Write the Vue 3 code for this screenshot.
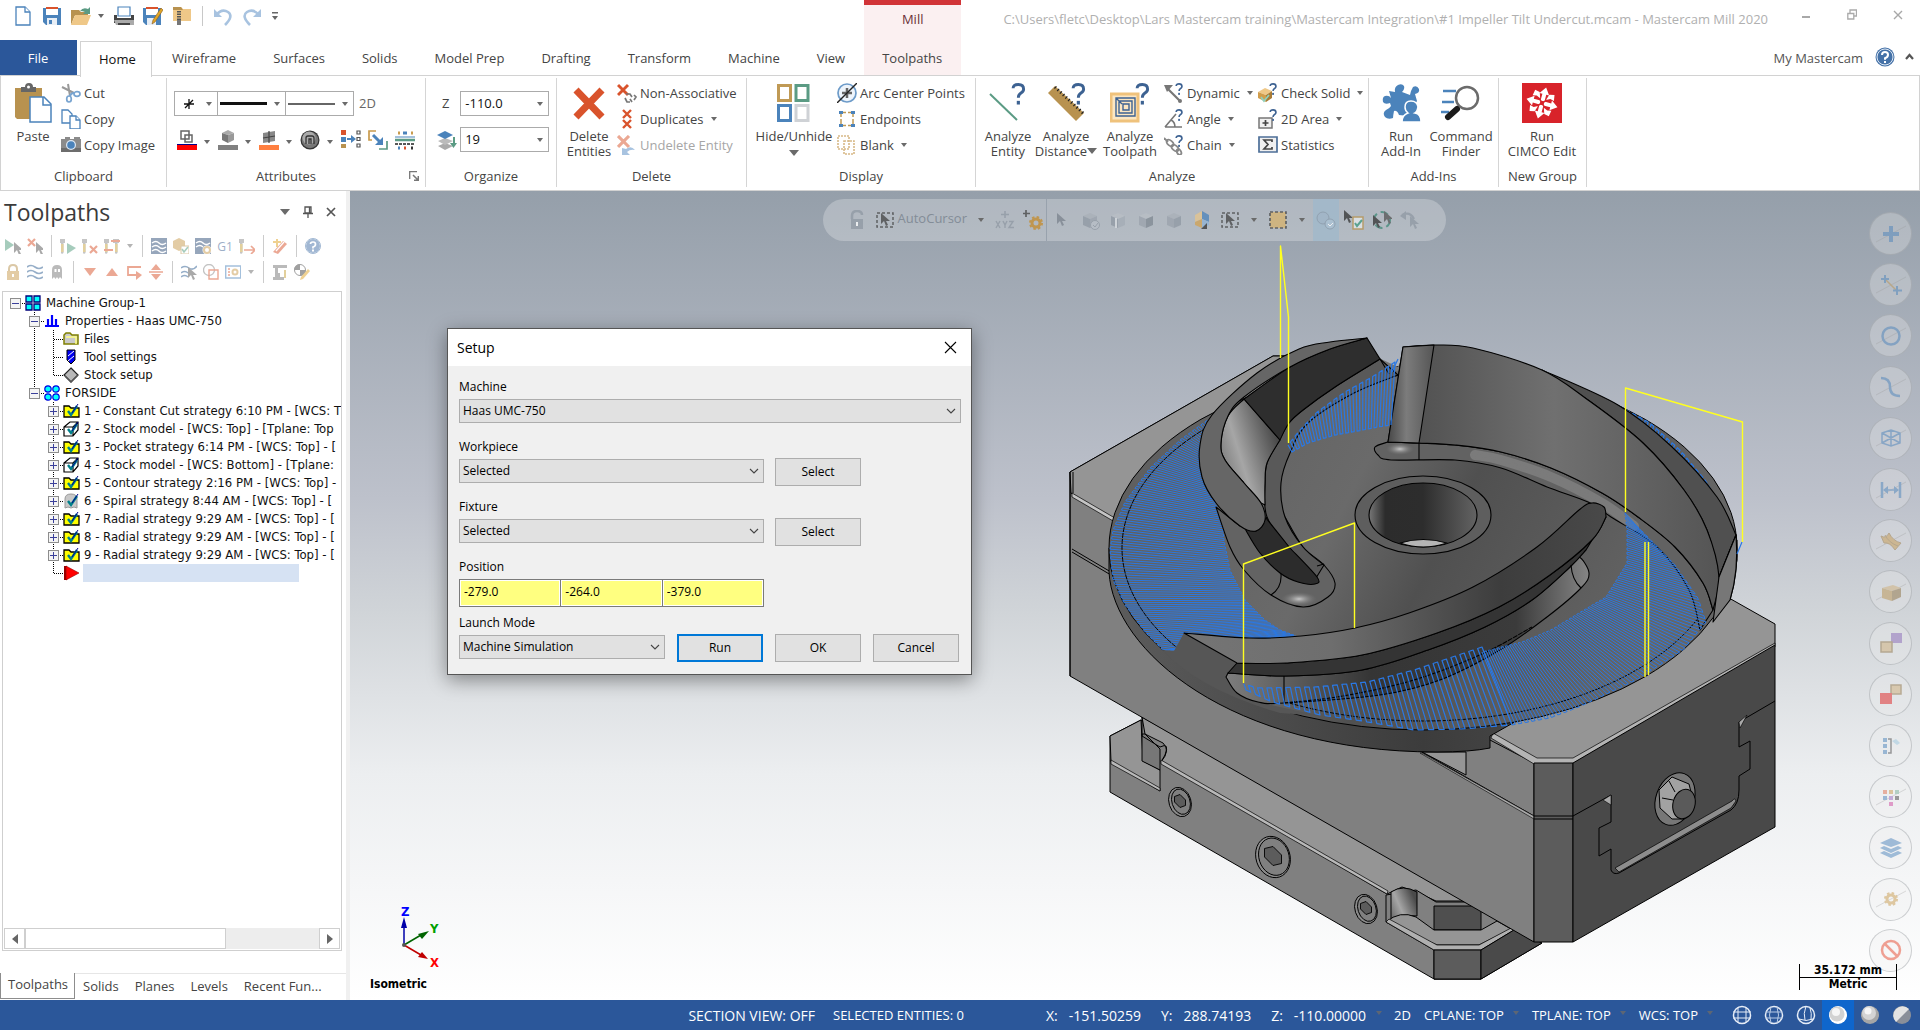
<template>
  <div class="app">
    <!-- Title bar -->
    <header class="titlebar">
      <div class="qat">
        <button v-for="q in quickAccess" :key="q.icon" :class="['icon-btn', q.cls]" :aria-label="q.label">
          <Icon :name="q.icon" :w="q.w || 20" :h="20" />
        </button>
      </div>
      <div class="doc-title">C:\Users\fletc\Desktop\Lars Mastercam training\Mastercam Integration\#1 Impeller Tilt Undercut.mcam - Mastercam Mill 2020</div>
      <div class="win-buttons">
        <button class="icon-btn" aria-label="Minimize"><Icon name="min" :w="10" :h="12" /></button>
        <button class="icon-btn" aria-label="Restore"><Icon name="restore" :w="10" :h="12" /></button>
        <button class="icon-btn" aria-label="Close"><Icon name="close" :w="10" :h="12" /></button>
      </div>
    </header>

    <!-- Ribbon tabs -->
    <nav class="tabs">
      <button class="tab file">File</button>
      <button class="tab home">Home</button>
      <button v-for="t in tabs" :key="t" class="tab">{{ t }}</button>
      <div class="context-tab">
        <span class="context-name">Mill</span>
        <button class="tab">Toolpaths</button>
      </div>
      <div class="account">
        <a href="#" class="my-link">My Mastercam</a>
        <button class="icon-btn" aria-label="Help"><Icon name="help" /></button>
        <button class="icon-btn" aria-label="Collapse ribbon"><Icon name="collapse" :w="9" :h="8" /></button>
      </div>
    </nav>

    <!-- Ribbon -->
    <section class="ribbon">
      <div class="group clipboard">
        <div class="group-body">
          <button class="big"><Icon name="paste" :w="40" :h="40" /><span>Paste</span></button>
          <div class="small-col">
            <button v-for="b in clipboard" :key="b.text" class="small"><Icon :name="b.icon" />{{ b.text }}</button>
          </div>
        </div>
        <div class="group-label">Clipboard</div>
      </div>

      <div class="group attributes">
        <div class="group-body attr-body">
          <div class="attr-row">
            <div class="style-combos">
              <button class="style-combo point" aria-label="Point style"><Icon name="pointStyle" :w="12" :h="12" /><i class="caret"></i></button>
              <button class="style-combo" aria-label="Line style"><i class="line thick"></i><i class="caret"></i></button>
              <button class="style-combo" aria-label="Line width"><i class="line"></i><i class="caret"></i></button>
            </div>
            <button class="plane-mode">2D</button>
          </div>
          <div class="attr-icons">
            <template v-for="a in attributes" :key="a.icon">
              <button class="icon-btn" :aria-label="a.label"><Icon :name="a.icon" /></button>
              <i v-if="a.menu" class="caret"></i>
            </template>
          </div>
        </div>
        <div class="group-label with-launcher">Attributes<Icon class="launcher" name="launcher" :w="10" :h="10" /></div>
      </div>

      <div class="group organize">
        <div class="group-body org-body">
          <div class="org-row">
            <label for="z-depth">Z</label>
            <div class="field"><input id="z-depth" v-model="zDepth" /><i class="caret"></i></div>
          </div>
          <div class="org-row">
            <label for="level" aria-label="Level"><Icon name="layers" /></label>
            <div class="field"><input id="level" v-model="level" /><i class="caret"></i></div>
          </div>
        </div>
        <div class="group-label">Organize</div>
      </div>

      <div class="group delete">
        <div class="group-body">
          <button class="big"><Icon name="bigX" :w="40" :h="40" /><span>Delete<br />Entities</span></button>
          <div class="small-col">
            <button v-for="b in deletes" :key="b.text" class="small" :disabled="b.off">
              <Icon :name="b.icon" />{{ b.text }}<i v-if="b.menu" class="caret"></i>
            </button>
          </div>
        </div>
        <div class="group-label">Delete</div>
      </div>

      <div class="group display">
        <div class="group-body">
          <button class="big wide"><Icon name="hide" :w="40" :h="40" /><span>Hide/Unhide</span><i class="caret large"></i></button>
          <div class="small-col">
            <button v-for="b in displays" :key="b.text" class="small">
              <Icon :name="b.icon" />{{ b.text }}<i v-if="b.menu" class="caret"></i>
            </button>
          </div>
        </div>
        <div class="group-label">Display</div>
      </div>

      <div class="group analyze">
        <div class="group-body">
          <button class="big"><Icon name="anEntity" :w="40" :h="40" /><span>Analyze<br />Entity</span></button>
          <button class="big distance"><Icon name="anDistance" :w="40" :h="40" /><span>Analyze<br />Distance<i class="caret large"></i></span></button>
          <button class="big path"><Icon name="anToolpath" :w="40" :h="40" /><span>Analyze<br />Toolpath</span></button>
          <div class="small-col first">
            <button v-for="b in analyzeA" :key="b.text" class="small"><Icon :name="b.icon" />{{ b.text }}<i class="caret"></i></button>
          </div>
          <div class="small-col">
            <button v-for="b in analyzeB" :key="b.text" class="small">
              <Icon :name="b.icon" />{{ b.text }}<i v-if="b.menu" class="caret"></i>
            </button>
          </div>
        </div>
        <div class="group-label">Analyze</div>
      </div>

      <div class="group addins">
        <div class="group-body">
          <button class="big"><Icon name="puzzle" :w="40" :h="40" /><span>Run<br />Add-In</span></button>
          <button class="big finder"><Icon name="finder" :w="40" :h="40" /><span>Command<br />Finder</span></button>
        </div>
        <div class="group-label">Add-Ins</div>
      </div>

      <div class="group newgroup">
        <div class="group-body">
          <button class="big wide"><Icon name="cimco" :w="40" :h="40" /><span>Run<br />CIMCO Edit</span></button>
        </div>
        <div class="group-label">New Group</div>
      </div>
    </section>

    <main class="workspace">
      <!-- Toolpaths manager -->
      <aside class="panel">
        <div class="panel-head">
          <h1>Toolpaths</h1>
          <div class="panel-tools">
            <i class="caret large"></i>
            <button class="icon-btn" aria-label="Pin"><Icon name="pin" :w="12" :h="12" /></button>
            <button class="icon-btn" aria-label="Close panel"><Icon name="closeDark" :w="10" :h="12" /></button>
          </div>
        </div>
        <div v-for="(row, r) in panelBars" :key="r" class="panel-bar">
          <template v-for="(n, i) in row" :key="i">
            <i v-if="n === '|'" class="bar-sep"></i>
            <i v-else-if="n === 'v'" class="caret bar-caret"></i>
            <button v-else-if="n === 'G1'" class="icon-btn g1">G1</button>
            <button v-else class="icon-btn" :aria-label="n"><Icon :name="n" :w="16" :h="16" /></button>
          </template>
        </div>

        <div class="tree-box">
          <ul class="tree">
            <li v-for="(row, i) in tree" :key="i" class="tree-row">
              <svg v-for="(c, k) in row.g" :key="k" class="guide" width="19" height="18">
                <path v-if="guides[c]" :d="guides[c]" stroke="#000" stroke-dasharray="1 1" fill="none" />
                <g v-if="row.box && k === row.g.length - 1">
                  <rect x="4.500" y="4.500" width="10" height="10" fill="#f4f4f4" stroke="#8d8d8d" />
                  <path :d="row.box === '+' ? 'M6 9.500h7M9.500 6v7' : 'M6 9.500h7'" stroke="#3a3f9a" />
                </g>
              </svg>
              <Icon :name="row.icon" :w="17" :h="16" />
              <span v-if="row.text" class="tree-text">{{ row.text }}</span>
              <span v-else class="insert-row"></span>
            </li>
          </ul>
          <div class="hscroll">
            <button aria-label="Scroll left"><Icon name="left" :w="8" :h="12" /></button>
            <div class="thumb"></div>
            <button class="end" aria-label="Scroll right"><Icon name="right" :w="8" :h="12" /></button>
          </div>
        </div>

        <div class="panel-tabs">
          <button class="active">Toolpaths</button>
          <button v-for="t in ['Solids', 'Planes', 'Levels', 'Recent Fun...']" :key="t">{{ t }}</button>
        </div>
      </aside>

      <!-- Graphics window -->
      <section class="viewport">
        <svg class="model" viewBox="1060 230 730 760" width="730" height="760" stroke-linejoin="round">
          <defs>
            <linearGradient id="side"><stop offset="0" stop-color="#5c5c5c" /><stop offset=".5" stop-color="#3c3c3c" /><stop offset=".95" stop-color="#555" /><stop offset="1" stop-color="#8a8a8a" /></linearGradient>
            <linearGradient id="disc" x2="1" y2=".3"><stop offset="0" stop-color="#5b5b5b" /><stop offset=".45" stop-color="#6a6a6a" /><stop offset=".62" stop-color="#505050" /><stop offset="1" stop-color="#666" /></linearGradient>
            <linearGradient id="blade"><stop offset="0" stop-color="#4b4b4b" /><stop offset=".5" stop-color="#707070" /><stop offset="1" stop-color="#555" /></linearGradient>
            <linearGradient id="nose"><stop offset="0" stop-color="#474747" /><stop offset=".4" stop-color="#7c7c7c" /><stop offset="1" stop-color="#555" /></linearGradient>
            <linearGradient id="inner" x1="0" y1=".8" x2=".9" y2=".3"><stop offset="0" stop-color="#707070" /><stop offset=".4" stop-color="#a6a6a6" /><stop offset="1" stop-color="#4a4a4a" /></linearGradient>
            <linearGradient id="bore"><stop offset="0" stop-color="#777" /><stop offset=".15" stop-color="#2c2c2c" /><stop offset=".5" stop-color="#2d2d2d" /><stop offset="1" stop-color="#636363" /></linearGradient>
            <linearGradient id="low"><stop offset="0" stop-color="#757575" /><stop offset=".35" stop-color="#6e6e6e" /><stop offset=".75" stop-color="#3d3d3d" /><stop offset="1" stop-color="#494949" /></linearGradient>
            <linearGradient id="fillet"><stop offset="0" stop-color="#7d7d7d" /><stop offset=".4" stop-color="#353535" /><stop offset=".8" stop-color="#3b3b3b" /><stop offset="1" stop-color="#858585" /></linearGradient>
            <radialGradient id="shine"><stop offset="0" stop-color="#c8c8c8" /><stop offset="1" stop-color="#777" stop-opacity="0" /></radialGradient>
          </defs>

          <!-- vise base -->
          <g stroke="#000" stroke-width="1">
            <path d="M1110 736 1141 720 1470 905 1513 930 1542 943 1481 979H1434L1110 792Z" fill="#808080" />
            <path d="M1110 736 1141 720 1143 761 1160 770V791L1111 762Z" fill="#959595" />
            <path d="M1142 717 1145 734 1163 743Q1171 750 1161 762L1387 894 1402 887 1416 892 1436 901H1470L1142 717Z" fill="#959595" />
            <path d="M1142 734V761L1160 770V749L1145 734Z" fill="#777" />
            <path d="M1142 717V736L1160 747Q1170 742 1165 755L1161 762" fill="none" />
            <path d="M1111 760 1160 788V791L1111 764ZM1161 760 1388 891 1387 894 1161 764Z" fill="#b8b8b8" stroke-width=".7" />
            <path d="M1386 895V922L1434 950V979H1481V950L1513 930 1470 902H1436L1416 890Z" fill="#808080" />
            <path d="M1391 892Q1403 884 1417 892V916Q1402 914 1391 921Z" fill="url(#inner)" />
            <path d="M1434 906H1481V930H1434Z" fill="#4f4f4f" />
            <path d="M1386 922Q1400 910 1416 917L1434 930H1481L1497 921 1511 929 1479 945H1437Z" fill="#959595" />
            <path d="M1386 922 1389 919 1437 945H1479L1511 928 1514 930 1481 950H1434Z" fill="#b0b0b0" stroke-width=".7" />
            <path d="M1434 950H1481V979H1434Z" fill="#5c5c5c" />
            <path d="M1481 950 1514 930 1542 943 1481 979Z" fill="#4a4a4a" />
          </g>

          <!-- main body -->
          <g stroke="#000">
            <path d="M1070 472 1273 356H1300L1534 760V942L1070 676Z" fill="#808080" />
            <path d="M1070 472 1273 356H1330V520H1113L1071 493Z" fill="#959595" />
            <path d="M1072 493 1120 521 1120 525 1072 497Z" fill="#c4c4c4" stroke-width=".7" />
            <path d="M1072 549 1116 575M1072 552 1116 578M1073 472V493M1070 472V676" fill="none" />
            <path d="M1400 740H1490L1534 763V816L1422 752Z" fill="#808080" />
            <path d="M1422 752H1466V775Z" fill="#959595" />
            <path d="M1422 753 1534 816V819L1420 753Z" fill="#a9a9a9" stroke-width=".6" />
            <path d="M1490 733 1537 761H1573L1775 645V624L1729 598 1650 600Z" fill="#959595" />
            <path d="M1493 733 1537 758H1573L1775 643V647L1573 764H1534L1491 738Z" fill="#b4b4b4" stroke-width=".7" />
            <path d="M1534 763H1573V942H1534Z" fill="#5c5c5c" />
            <path d="M1573 763 1775 645V827L1573 942Z" fill="#494949" />
            <path d="M1534 816H1573M1534 819H1573" />
            <path d="M1573 816 1611 795V822L1599 828V856L1611 849V870Q1613 875 1619 873L1731 810Q1739 804 1739 790V776L1750 769V741L1739 747V722L1775 701" fill="none" />
            <path d="M1615 868 1732 801Q1735 797 1736 801L1731 808 1619 872Z" fill="#8d8d8d" stroke-width=".7" />
            <path d="M1603 800 1611 795V805ZM1739 722 1747 715 1740 728Z" fill="#aaa" stroke-width=".6" />
            <ellipse cx="1675" cy="799" rx="19" ry="27" fill="#777" transform="rotate(20 1675 799)" />
            <path d="M1659 790 1672 777 1689 784 1693 800 1684 819 1672 819 1660 808Z" fill="#a2a2a2" />
            <ellipse cx="1684" cy="804" rx="11" ry="15" fill="#5a5a5a" transform="rotate(15 1684 804)" />
            <path d="M1673 800 1662 798M1675 792 1669 781" />
          </g>
          <g v-for="s in screws" :key="s.x" stroke="#000" stroke-width=".9">
            <ellipse :cx="s.x" :cy="s.y" :rx="s.r" :ry="s.r + 4" fill="#8b8b8b" :transform="`rotate(-18 ${s.x} ${s.y})`" />
            <ellipse :cx="s.x + 1" :cy="s.y" :rx="s.r - 2" :ry="s.r + 2" fill="#808080" :transform="`rotate(-18 ${s.x} ${s.y})`" />
            <path :d="`M${s.x - s.r / 2} ${s.y - s.r / 2}l${s.r / 2}-2 ${s.r / 2} ${s.r / 2}v${s.r / 2}l-${s.r / 2} 2-${s.r / 2}-${s.r / 2}Z`" fill="#5c5c5c" />
          </g>

          <!-- impeller disc -->
          <g stroke="#000">
            <path d="M1109 548V572C1113 650 1230 752 1437 752Q1470 752 1490 748V736L1730 600Q1738 575 1737 540Z" fill="url(#side)" />
            <ellipse cx="1423" cy="548" rx="314" ry="182" fill="url(#disc)" />
            <path d="M1367 338 1381 359 1398 367 1404 352 1404 372 1388 370Z" fill="#777" stroke="none" />
          </g>
          <path :d="hatchLeft" class="toolpath dense" />
          <path :d="hatchEdge" class="toolpath" />
          <ellipse cx="1423" cy="548" rx="301" ry="173" fill="none" stroke="#000" stroke-dasharray="5 1" />
          <path d="M1184 633 1174 651 1162 650Q1200 690 1280 713L1320 716 1258 702 1237 693 1227 675 1237 663Z" fill="#565656" />

          <g stroke="#000" stroke-width="1.100">
            <!-- left blade -->
            <path :d="shapes.tailFillet" fill="#636363" />
            <ellipse cx="1299" cy="599" rx="18" ry="7" fill="url(#shine)" stroke="none" />
            <path :d="shapes.fillet1" fill="#595959" />
            <path :d="shapes.tail" fill="#2c2c2c" />
            <path :d="shapes.b1Light" fill="url(#inner)" />
            <path :d="shapes.b1Dark" fill="#2e2e2e" />
            <path :d="shapes.b1Top" fill="#666" />
            <path d="M1271 595Q1282 588 1281 574M1317 566 1324 564M1380 359 1389 374" fill="none" />
            <!-- right blade -->
            <path :d="shapes.fillet2" fill="#626262" />
            <g fill="none" stroke="#b5b5b5" stroke-linecap="round" opacity=".3">
              <path :d="shapes.shineLine" stroke-width="10" />
              <path :d="shapes.shineLine" stroke-width="6" />
              <path :d="shapes.shineLine" stroke-width="2" />
            </g>
            <ellipse cx="1400" cy="449" rx="14" ry="6" fill="url(#shine)" stroke="none" />
            <path :d="shapes.crescent" fill="#505050" />
            <path :d="shapes.b2Face" fill="url(#blade)" />
            <path d="M1403 347 1434 345 1419 443 1388 442Z" fill="url(#nose)" />
            <path d="M1419 443V460M1719 577 1736 535 1737 560 1730 598" fill="none" />
            <path d="M1719 577 1736 535Q1739 570 1730 600L1713 622Z" fill="#777" />
            <!-- hub -->
            <ellipse cx="1423" cy="515" rx="68" ry="39" fill="#5e5e5e" />
            <ellipse cx="1423" cy="515" rx="54" ry="32" fill="url(#bore)" />
            <path d="M1400 543Q1423 536 1447 543 1423 551 1400 543Z" fill="#b5b5b5" />
            <!-- front blade -->
            <path :d="shapes.fillet3" fill="url(#fillet)" />
            <path :d="shapes.b3Side" fill="#343434" />
            <path :d="shapes.b3Top" fill="url(#low)" />
            <path d="M1284 676V703M1571 565Q1572 580 1581 588" fill="none" />
            <path :d="shapes.innerArc" fill="none" stroke-dasharray="5 1" />
          </g>
          <path :d="hatchTop" class="toolpath" />
          <path :d="hatchFront" class="toolpath" />
          <path :d="hatchRight" class="toolpath dense" />
          <path d="M1742 542 1737 554M1392 372 1398 359" class="toolpath" />

          <!-- rapid moves -->
          <g class="rapid">
            <path d="M1280.500 358V246L1288.500 317V443" />
            <path d="M1625.500 512V388L1742.500 422V542" />
            <path d="M1243.500 683V564L1354.500 523V628" />
            <path d="M1645 542V677M1648.500 542V675" />
          </g>
        </svg>

        <!-- selection bar -->
        <div class="select-bar">
          <template v-for="(n, i) in selectBar" :key="i">
            <span v-if="n === 'AutoCursor'" class="auto">AutoCursor</span>
            <i v-else-if="n === '|'" class="select-sep"></i>
            <i v-else-if="n === 'v'" class="caret"></i>
            <button v-else :class="['icon-btn', { hot: n === 'sNever' }]" :aria-label="n"><Icon :name="n" /></button>
          </template>
        </div>

        <!-- quick masks -->
        <div class="masks">
          <button v-for="n in masks" :key="n" :aria-label="n">
            <Icon :name="n" :w="22" :h="22" />
          </button>
        </div>

        <svg class="gnomon" width="60" height="64" viewBox="0 0 60 64">
          <path d="M14 40V16" stroke="#0000a8" stroke-width="1.500" /><path d="m14 12 3 11h-6z" fill="#0000a8" />
          <path d="m14 40 17-10" stroke="#006400" stroke-width="1.500" /><path d="m39 26-7 8-4-5z" fill="#006400" />
          <path d="m14 40 17 10" stroke="#c00000" stroke-width="1.500" /><path d="m38 54-10-2 4-5z" fill="#c00000" />
          <circle cx="14" cy="40" r="2" fill="#555" />
          <text x="11" y="11" fill="#00f">Z</text><text x="40" y="28" fill="#00a000">Y</text><text x="40" y="62" fill="#f00">X</text>
        </svg>
        <div class="view-name">Isometric</div>
        <div class="scale"><span class="scale-top">35.172 mm</span><span>Metric</span></div>

        <!-- Setup dialog -->
        <form class="dialog" @submit.prevent>
          <div class="dialog-head">Setup<button type="button" class="icon-btn" aria-label="Close dialog"><Icon name="dlgClose" :w="13" :h="13" /></button></div>
          <div class="dialog-body">
            <div class="form-row">
              <div class="form-item grow">
                <label for="machine">Machine</label>
                <div class="combo"><select id="machine"><option>Haas UMC-750</option></select><Icon name="chevron" :w="10" :h="6" /></div>
              </div>
            </div>
            <div v-for="f in ['Workpiece', 'Fixture']" :key="f" class="form-row">
              <div class="form-item mid">
                <label :for="f">{{ f }}</label>
                <div class="combo"><select :id="f"><option>Selected</option></select><Icon name="chevron" :w="10" :h="6" /></div>
              </div>
              <button type="button" class="btn">Select</button>
            </div>
            <div class="form-item mid position">
              <label for="pos-x">Position</label>
              <div class="pos">
                <input id="pos-x" v-model="position.x" />
                <input v-model="position.y" aria-label="Position Y" />
                <input v-model="position.z" aria-label="Position Z" />
              </div>
            </div>
            <div class="form-row last">
              <div class="form-item launch">
                <label for="launch">Launch Mode</label>
                <div class="combo"><select id="launch"><option>Machine Simulation</option></select><Icon name="chevron" :w="10" :h="6" /></div>
              </div>
              <button type="submit" class="btn primary">Run</button>
              <button type="button" class="btn">OK</button>
              <button type="button" class="btn">Cancel</button>
            </div>
          </div>
        </form>
      </section>
    </main>

    <!-- Status bar -->
    <footer class="status">
      <button class="st section">SECTION VIEW: OFF</button>
      <span class="st selected">SELECTED ENTITIES: 0</span>
      <span v-for="c in coords" :key="c.axis" class="st coord"><span>{{ c.axis }}</span><span>{{ c.value }}</span></span>
      <i class="caret"></i>
      <button class="st">2D</button>
      <template v-for="p in ['CPLANE: TOP', 'TPLANE: TOP', 'WCS: TOP']" :key="p">
        <button class="st plane">{{ p }}</button><i class="caret"></i>
      </template>
      <div class="shading">
        <button v-for="n in shading" :key="n" :class="{ on: n === 'shOutline' }" :aria-label="n"><Icon :name="n" /></button>
      </div>
    </footer>
  </div>
</template>

<script setup>
import { ref, reactive, h } from 'vue'

// -- Icons --
const arrow = (x, y, c = '#555') => `<path d="M${x} ${y}v11l3-3 2 5 2-1-2-4h4z" fill="${c}"/>`
const cube = (a, b, c) => `<path d="M3 6 10 3l7 3-7 3z" fill="${a}"/><path d="M3 6l7 3v9l-7-3z" fill="${b}"/><path d="M17 6l-7 3v9l7-3z" fill="${c}"/>`
const page = 'fill="#fff" stroke="#4b83bb" stroke-width="1.3"'
const question = (x, y, s) => `<g transform="translate(${x} ${y}) scale(${s})"><path d="M2 5Q2 1.500 7 1.500T12 6Q12 8 9.500 9.500T7 14" fill="none" stroke="#3d6292" stroke-width="2.800"/><rect x="5.500" y="17" width="3" height="3.500" fill="#3d6292"/></g>`
const redX = (x, y, s, c = '#d9532c') => `<path d="M${x} ${y}l${s} ${s}M${x + s} ${y}l-${s} ${s}" stroke="${c}" stroke-width="${s / 4 + 0.4}"/>`
const check = '<path d="m5 8 3 4 6-9" fill="none" stroke="#00808a" stroke-width="2.400"/><path d="m9 10 6-9" stroke="#00008b"/>'
const tool = (x) => `<path d="M${x} 1h6v4h-1.500v10l-1.500 1-1-1V5h-2z" fill="#8c8c8c"/><rect x="${x + 2}" y="6" width="2.500" height="8" fill="#c9a33b"/>`
const globe = '<circle cx="10" cy="10" r="8.500" fill="none" stroke="#e6edf7" stroke-width="1.500"/>'
const gear = (x, y, c) => `<circle cx="${x}" cy="${y}" r="4" fill="none" stroke="${c}" stroke-width="3"/><circle cx="${x}" cy="${y}" r="6" fill="none" stroke="${c}" stroke-width="2" stroke-dasharray="2.500 2.200"/>`
const slash = '<path d="M-4 19 26 3" stroke="#999" stroke-width="1" opacity=".6"/>'

const icons = {
  new: `<path d="M3 1h9l5 5v13H3z" ${page}/><path d="M12 1v5h5" ${page}/>`,
  save: '<path d="M1 2h18v17H4l-3-3z" fill="#4b83bb"/><path d="M4 2h12v7H4z" fill="#fff"/><path d="M4 1h12v2H4z" fill="#d9532c"/><path d="M5 12h10v7H5z" fill="#e8eef5"/><path d="M7 14h3v4H7z" fill="#4b83bb"/>',
  open: '<path d="M0 4h8l2 2h7v4H0z" fill="#b8924f"/><path d="M0 4v15l4-10z" fill="#b8924f"/><path d="M0 19 4 9h16l-4 10z" fill="#efc888"/><path d="M9 5q3-4 8-2l2-2v7h-7l2-2q-2-1-5-1z" fill="#5b9b84"/>',
  caretIcon: '<path d="M1 8h6l-3 4z" fill="#666"/>',
  print: '<path d="M4 1h12v9H4z" fill="#fff" stroke="#4b83bb" stroke-width="1.200"/><path d="M0 9h3v3h14V9h3v8H0z" fill="#444"/><path d="M0 14h20v5H2z" fill="#aaa"/><path d="M4 17h12v2H4z" fill="#444"/>',
  saveAs: '<path d="M0 2h18v17H3l-3-3z" fill="#4b83bb"/><path d="M3 2h12v7H3z" fill="#fff"/><path d="M3 1h12v2H3z" fill="#d9532c"/><path d="M4 12h9v7H4z" fill="#e8eef5"/><path d="m18 2 2 2-8 12-3 2 1-4z" fill="#e0a526" stroke="#8a5a20" stroke-width=".6"/>',
  zip: '<path d="M1 1h8l2 2h8v12H1z" fill="#efc888"/><path d="M1 1h8l2 3H1z" fill="#b8924f"/><path d="M7 5v14" stroke="#555" stroke-width="4" stroke-dasharray="1.500 1"/><path d="M5 14h4v5H5z" fill="#777"/>',
  sep: '<path d="M1.500 -4v28" stroke="#c8c8c8"/>',
  undo: '<path d="M3 9q6-7 12-3t-3 13" fill="none" stroke="#a8c3e0" stroke-width="2.600"/><path d="M1 3v8h8z" fill="#a8c3e0"/>',
  redo: '<path d="M17 9q-6-7-12-3t3 13" fill="none" stroke="#a8c3e0" stroke-width="2.600"/><path d="M19 3v8h-8z" fill="#a8c3e0"/>',
  custom: '<path d="M1 6h6v1.500H1zM1 10h6l-3 4z" fill="#666"/>',
  min: '<path d="M1 7h8v2H1z" fill="#a8a8a8"/>',
  restore: '<path d="M3 1h6.500v6H3z" fill="none" stroke="#aaa" stroke-width="1.300"/><path d="M.8 4.500h6v5.500h-6z" fill="#fff" stroke="#aaa" stroke-width="1.300"/>',
  close: '<path d="m1 2 8 8M9 2l-8 8" stroke="#a8a8a8" stroke-width="1.400"/>',
  closeDark: '<path d="m1 2 8 8M9 2l-8 8" stroke="#555" stroke-width="1.700"/>',
  pin: '<path d="M3 1h6v6H3zM7.500 1v6M1 7.500h10M6 8v4" fill="none" stroke="#555" stroke-width="1.300"/>',
  help: '<circle cx="10" cy="10" r="9.500" fill="#4572a8"/><circle cx="10" cy="10" r="8" fill="#4572a8" stroke="#dfe9f5"/><path d="M7 8q0-3 3-3t3 2.700-3 3.500v1.500" fill="none" stroke="#fff" stroke-width="2"/><rect x="9" y="14" width="2" height="2" fill="#fff"/>',
  collapse: '<path d="m1 6 3.500-4L8 6" fill="none" stroke="#555" stroke-width="2.200"/>',
  launcher: '<path d="M.7 8V.7H8" fill="none" stroke="#777" stroke-width="1.300"/><path d="m4 4 5 5M9.300 5v4.300H5" fill="none" stroke="#777" stroke-width="1.500"/>',

  paste: '<path d="M2 5h27v31H4l-2-2z" fill="#b8924f"/><path d="M8 4h4q0-4 4-4t4 4h3v5H8z" fill="#666"/><circle cx="15.500" cy="4" r="1.500" fill="#fff"/><path d="M17 14h14l7 7v18H17z" fill="#fff" stroke="#4b83bb" stroke-width="1.500"/><path d="M30 14v8h8" fill="none" stroke="#4b83bb" stroke-width="1.500"/>',
  cut: '<path d="M1 4l12 6M7 1l2 12" stroke="#999" stroke-width="2"/><ellipse cx="16" cy="11" rx="3" ry="2.300" fill="none" stroke="#78a4d0" stroke-width="1.700"/><ellipse cx="8" cy="16" rx="2.300" ry="3" fill="none" stroke="#78a4d0" stroke-width="1.700"/><path d="M9 13q1-3 4-3" stroke="#78a4d0" stroke-width="2" fill="none"/>',
  copy: `<path d="M1 1h6l4 4v9H1z" ${page}/><path d="M9 7h6l4 4v9H9z" ${page}/><path d="M15 7v4h4" ${page}/>`,
  camera: '<path d="M0 4h4V2h5v2h4V2h6v2h1v13H0z" fill="#8b8b8b"/><path d="M0 13h20v4H0z" fill="#6d6d6d"/><circle cx="10" cy="10" r="5" fill="#dce8f5"/><circle cx="10" cy="10" r="3.800" fill="#4b83bb"/>',
  pointStyle: '<path d="M6 1v10M1 6h10M2 10l8-8" stroke="#111" stroke-width="1.300"/>',
  aWire: '<path d="M4 1h8v8H4zM8 5h7v7H8z" fill="none" stroke="#666" stroke-width="1.500"/><path d="M0 14h20v1H0z" fill="#00008b"/><path d="M0 15h20v5H0z" fill="#f00"/>',
  aSolid: '<path d="m4 3 6-3 6 3-6 2z" fill="#aaa"/><path d="M4 3l6 2v8l-6-3z" fill="#777"/><path d="m16 3-6 2v8l6-3z" fill="#999"/><path d="M0 15h20v5H0z" fill="#808080"/>',
  aSurf: '<path d="M4 3 16 1v10L4 13z" fill="#888"/><path d="M4 8 16 6M10 1v12" stroke="#444" stroke-width="1.200"/><path d="M0 15h20v5H0z" fill="#ff7f40"/>',
  aMat: '<circle cx="10" cy="10" r="9.500" fill="#333"/><circle cx="10" cy="10" r="8.300" fill="#777"/><circle cx="9" cy="8" r="6.500" fill="#aaa"/><path d="M6 14V8q0-2 2-2h4q2 0 2 2v6M9 14V9h2v5" fill="none" stroke="#333" stroke-width="1.300"/>',
  aSet: '<path d="M0 0h5v5H0z" fill="#d9532c"/><path d="M0 7h5v5H0z" fill="#4b83bb"/><path d="M0 14h5v4H0z" fill="#b8924f"/><path d="M6 9h6" stroke="#4b83bb" stroke-width="2"/><path d="m10 5 5 4-5 4z" fill="#4b83bb"/><path d="M16 1h3v3h-3zM16 7.500h3v3h-3zM16 14h3v3h-3z" fill="none" stroke="#555" stroke-width="1.200"/>',
  aMatch: '<path d="M8 1H1v9h3" fill="none" stroke="#c99b4d" stroke-width="1.700"/><path d="M19 11v8h-8" fill="none" stroke="#5b9b84" stroke-width="1.700"/><path d="m5 5 7 7" stroke="#4b83bb" stroke-width="3"/><path d="M15 7v8H7z" fill="#4b83bb"/>',
  aLines: '<path d="M0 7h20" stroke="#4b83bb"/><path d="M0 10h20" stroke="#5b9b84" stroke-width="2.500"/><path d="M0 14h20" stroke="#222" stroke-width="1.500" stroke-dasharray="3 1"/><path d="M3 3h2M16 3h2" stroke="#c99b4d" stroke-width="3"/><path d="M8 3h4" stroke="#4b83bb" stroke-width="3"/><path d="M3 18h2" stroke="#4b83bb" stroke-width="3"/><path d="M9 18h2" stroke="#d9532c" stroke-width="3"/><path d="M16 18h2" stroke="#333" stroke-width="3"/>',
  layers: '<path d="m1 16 7-3 8 3-8 4z" fill="#aaa"/><path d="m1 11 7-3 8 3-8 4z" fill="#bbb"/><path d="m0 5 8-4 8 4-8 4z" fill="#4b83bb"/><path d="M17 7v8" stroke="#5b9b84" stroke-width="2"/><path d="M13 13h7l-3.500 5z" fill="#5b9b84"/>',

  bigX: '<path d="m7 7 26 27M33 7 7 34" stroke="#d9532c" stroke-width="7"/>',
  delNon: redX(1, 2, 10) + '<path d="M9 11h4l2 3M17 12l2 2-2 3M8 15l2 4h3M15 19l-2-3" fill="none" stroke="#777" stroke-width="1.700"/>',
  delDup: redX(6, 1, 8) + redX(6, 11, 8),
  undel: redX(1, 1, 11, '#eba893') + '<path d="M5 13v7h8l-3-3q3-3 8-2-4-5-9-1z" fill="#a8c3e0"/>',
  hide: '<g fill="none" stroke-width="3"><path d="M4.500 2.500h12v15h-12z" stroke="#c09a55"/><path d="M22 2.500h12v15H22z" stroke="#5b9b84"/><path d="M4.500 22.500h12v15h-12z" stroke="#4b83bb"/><path d="M22 22.500h12v15H22z" stroke="#cfd2d6"/></g>',
  arc: '<circle cx="10" cy="10" r="9" fill="#eef4fb" stroke="#6d9bc9" stroke-width="1.700"/><path d="M10 5v10M5 10h10" stroke="#666" stroke-width="2.500"/><path d="M0 20 20 0" stroke="#222" stroke-width="1.400"/>',
  ends: '<path d="M4 3.500h12M4 16.500h12M4 3v13M16 3v13" stroke="#c09a55" stroke-width="1.500" stroke-dasharray="5 2"/><path d="M2 2h4v3H2zM14 2h4v3h-4zM2 15h4v3H2zM14 15h4v3h-4z" fill="#4b83bb"/>',
  blank: '<path d="M1 1h11v13H1zM7 6h10v13H7z" fill="none" stroke="#d8b988" stroke-width="1.600" stroke-dasharray="2 1"/>',
  anEntity: '<path d="m2 11 27 26" stroke="#5b9b84" stroke-width="2"/>' + question(23, 0, 1.05),
  anDistance: '<path d="m2 10 7-7 29 27-8 8z" fill="#b8924f"/><path d="m9 4 29 27" stroke="#222" stroke-width="3" stroke-dasharray="1.200 2.500"/>' + question(25, 0, 1.05),
  anToolpath: '<path d="M1 11h27v27H1z" fill="#fbe6c2" stroke="#efc27c" stroke-width="3"/><path d="M6 15h19v18H6zM9 18h13v12H9zM13 21h6v6h-6zM6 15l6 6" fill="none" stroke="#3d6292" stroke-width="1.400"/>' + question(25, 0, 1.05),
  dyn: '<path d="m4 6 12 12" stroke="#777" stroke-width="2.200"/><path d="M0 2h9L3 9z" fill="#777"/><circle cx="16" cy="18" r="2" fill="#777"/>' + question(11, 0, 0.58),
  angle: '<path d="M1 18h17M1 18 12 5M7 11q4 2 4 7" fill="none" stroke="#777" stroke-width="1.600"/>' + question(11, 0, 0.58),
  chain: '<g fill="none" stroke="#888" stroke-width="1.800"><path d="M0 3l4 4"/><ellipse cx="6" cy="8" rx="4" ry="2.500" transform="rotate(40 6 8)"/><ellipse cx="11" cy="13" rx="4" ry="2.500" transform="rotate(40 11 13)"/><ellipse cx="15" cy="17" rx="3" ry="2" transform="rotate(60 15 17)"/></g>' + question(11, 0, 0.58),
  solid: '<path d="m0 9 7-4 7 3-6 4z" fill="#efc888"/><path d="m0 9 8 3v7l-8-4z" fill="#d19d4b"/><path d="m14 8-6 4v7l6-4z" fill="#a97b35"/><path d="m3 14 3 4 5-6" fill="none" stroke="#8fd0bd" stroke-width="1.800"/>' + question(11, 0, 0.58),
  area: '<path d="M1 9h13v10H1z" fill="#f0f0f0" stroke="#777" stroke-width="1.500"/><path d="M7.500 11v6M4.500 14h6" stroke="#444" stroke-width="1.700"/>' + question(11, 0, 0.58),
  stats: '<path d="M1 2h18v15H1z" fill="#f0f0f0" stroke="#4d6f98" stroke-width="1.700"/><path d="M14 7V5H6l4 4.500L6 14h8v-2" fill="none" stroke="#444" stroke-width="1.700"/>',
  puzzle: '<g fill="#4b83bb"><path d="m8 8 6 1q-1-5 3-7 4-2 6 1 1 3-2 6l8 3q1-5 3-8 4-2 6 2 1 4-4 5l2 7-9 15-9-1q-2-5-5-4-1 5-1 7-5 2-8-1-3-4 1-7 4-2 5-4l-1-3q-5 2-7-1-1-5 2-6 4-1 6 2z"/></g><path d="M30 18q6 0 7 6-1 5-3 6 6 1 6 9H21q0-7 6-9-3-2-3-6 0-6 6-6z" fill="#4b83bb" stroke="#fff" stroke-width="1.500"/>',
  finder: '<path d="M2 8h13M1 19h12M0 29h8" stroke="#4b83bb" stroke-width="2.500"/><circle cx="26" cy="15" r="11" fill="#fff" stroke="#6b6b6b" stroke-width="2.500"/><path d="m16 26-9 8" stroke="#1b1b1b" stroke-width="6" stroke-linecap="round"/>',
  cimco: '<path d="M0 0h40v40H0z" fill="#d8232a"/><g transform="rotate(15 20 20)"><g fill="#fff"><path d="M18 18v-7h-3l5-7 5 7h-3v7zM18 22v7h-3l5 7 5-7h-3v-7zM18 18h-7v-3l-7 5 7 5v-3h7zM22 18h7v-3l7 5-7 5v-3h-7z"/><path d="m10 9 5 1 2 6-4-2-4 1zM30 9l-5 1-2 6 4-2 4 1zM10 31l5-1 2-6-4 2-4-1zM30 31l-5-1-2-6 4 2 4-1z"/></g><path d="M16 16l8 8M24 16l-8 8" stroke="#d8232a" stroke-width="1.300"/></g>',

  pSelAll: '<path d="m0 1 9 6-9 6z" fill="#4f9a7c"/>' + arrow(9, 4),
  pSelNone: redX(1, 1, 7) + arrow(9, 4),
  pRegen: tool(-1) + '<path d="m7 5 9 5-9 6z" fill="#4f9a7c"/>',
  pRegenX: tool(-1) + redX(8, 8, 7),
  pSwap: tool(-1) + tool(9) + '<path d="M7 3h9M0 12h9" stroke="#d9532c" stroke-width="2"/>',
  pBack: '<path d="M0 0h16v16H0z" fill="#2f4f79"/><path d="M1 5q4-3 7 0t7 0M1 9q4-3 7 0t7 0M1 13q4-3 7 0t7 0" fill="none" stroke="#fff" stroke-width="1.500"/>',
  pVerify: '<path d="m0 3 6-3 6 3v7l-6 3-6-3z" fill="#c99b4d"/><path d="M8 8h8v8H8z" fill="#fff" stroke="#b8924f"/><path d="m9 11 2 3 4-5" stroke="#4f9a7c" fill="none" stroke-width="1.600"/>',
  pSim: '<path d="M0 0h16v16H0z" fill="#2f4f79"/><path d="M1 5q4-3 7 0t7 0M1 9q4-3 7 0" fill="none" stroke="#fff" stroke-width="1.500"/><circle cx="12" cy="12" r="4.500" fill="#fff"/><circle cx="12" cy="12" r="3" fill="none" stroke="#c99b4d" stroke-width="2"/>',
  pFeed: tool(-1) + '<path d="M5 12h10M12 8l4 4-4 4" stroke="#d9532c" stroke-width="1.700" fill="none"/>',
  pWand: '<path d="m1 14 10-11 4 3-9 10z" fill="#d9532c"/><path d="m4 13 8-9" stroke="#fff" stroke-width="1.300"/><path d="M1 4h8M5 1v8" stroke="#e0a526" stroke-width="2"/>',
  pHelp: '<circle cx="8" cy="8" r="7" fill="#4572a8"/><circle cx="8" cy="8" r="7.500" fill="none" stroke="#4572a8"/><path d="M5.500 6q0-2 2.500-2t2.500 2.200T8 9v1.500" fill="none" stroke="#fff" stroke-width="1.700"/><rect x="7" y="11.500" width="2" height="2" fill="#fff"/>',
  pLock: '<path d="M4 8V5q0-4 4-4t4 4v3" fill="none" stroke="#b8924f" stroke-width="2"/><path d="M2 7h12v9H2z" fill="#c99b4d"/><path d="M7 10h2v3H7z" fill="#fff"/>',
  pWaves: '<path d="M0 3q4-3 8 0t8 0M0 8q4-3 8 0t8 0M0 13q4-3 8 0t8 0" fill="none" stroke="#2f5f93" stroke-width="1.600"/>',
  pGhost: '<path d="M3 15V6q0-5 5-5t5 5v9l-2-2-1.500 2L8 13l-1.500 2L5 13z" fill="#777"/><path d="M5.500 5h2v3h-2zM9 5h2v3H9z" fill="#fff"/>',
  pDown: '<path d="M2 4h12l-6 8z" fill="#d9532c"/>',
  pUp: '<path d="M2 12h12L8 4z" fill="#d9532c"/>',
  pInsert: '<path d="M15 3H2v8h9" fill="none" stroke="#d9532c" stroke-width="1.800"/><path d="m10 7 6 4-6 5z" fill="#d9532c"/>',
  pScroll: '<path d="M3 6h10L8 0zM3 10h10l-5 6zM1 7.300h14v1.500H1z" fill="#d9532c"/>',
  pPick: '<path d="M0 4q4-3 8 0t8-2M0 9q4-3 7 0M0 13q4-3 7 0" fill="none" stroke="#2f5f93" stroke-width="1.500"/>' + arrow(7, 3),
  pBool: '<circle cx="6" cy="6" r="5.500" fill="none" stroke="#888" stroke-width="1.300"/><path d="M6 6h9v9H6z" fill="none" stroke="#d9532c" stroke-width="1.400"/>',
  pOptions: '<path d="M.7 2h15v12H.7z" fill="#fff" stroke="#4b83bb" stroke-width="1.400"/><path d="M3 5h2M3 8h2M3 11h2" stroke="#d9532c" stroke-width="1.500"/><circle cx="10" cy="8" r="2.500" fill="none" stroke="#c99b4d" stroke-width="2"/>',
  pMachine: '<path d="M1 1h14v3H1zM3 4h3v5H3zM1 13h11v3H1zM3 9h5v4H3z" fill="#777"/><path d="M13 6v8" stroke="#c9a33b" stroke-width="2"/>',
  pEdit: '<circle cx="6" cy="6" r="5.500" fill="#fff" stroke="#444"/><path d="M6 0a6 6 0 0 0-6 6h6zM6 12a6 6 0 0 0 6-6H6z" fill="#444"/><path d="m14 5 2 2-7 8-3 1 1-3z" fill="#e0a526"/>',

  tGroup: '<path d="M1 1h6v6H1zM9 1h6v6H9zM1 9h6v6H1zM9 9h6v6H9z" fill="#0ff" stroke="#00007a" stroke-width="1.300"/>',
  tProps: '<path d="M1 13h14" stroke="#00f" stroke-width="2"/><path d="M4 13V6M8 13V2M12 13V6" stroke="#00f" stroke-width="2.200"/>',
  tFiles: '<path d="M1 13V4l2-2h4l2 2h6v9z" fill="#c9c9c9" stroke="#808000" stroke-width="1.500"/><path d="M3 6h10v7" fill="none" stroke="#ffff80" stroke-width="1.500"/>',
  tTool: '<path d="M4 1h8v10l-4 4-4-4z" fill="#0000f0" stroke="#000"/><path d="m5 7 6-5M5 12l6-5" stroke="#fff"/>',
  tStock: '<path d="m8 1 7 7-7 7-7-7z" fill="#b8b8b8" stroke="#222" stroke-width="1.200"/><path d="m2 9 6 6 7-7" fill="none" stroke="#555" stroke-width="1.500"/>',
  tOps: '<g fill="#0ff" stroke="#0000e0" stroke-width="1.200"><circle cx="4" cy="4" r="3.200"/><circle cx="12" cy="4" r="3.200"/><circle cx="4" cy="12" r="3.200"/><circle cx="12" cy="12" r="3.200"/></g>',
  tFolder: `<path d="M1 14V3h5l2 2h8v9z" fill="#ff0" stroke="#000" stroke-width="1.300"/>${check}`,
  tModel: `<path d="m1 6 6-5h8v8l-5 6H1zM1 6h9v9M10 6l5-5" fill="#fff" stroke="#000" stroke-width="1.200"/>${check}`,
  tGhost: `<path d="M2 15V6q0-5 6-5t6 5v9l-3-1-3 1-3-1z" fill="#c8c8c8" stroke="#999"/>${check}`,
  tArrow: '<path d="M1 1h3v14H1z" fill="#900"/><path d="m3 1 13 7-13 7z" fill="#f00" stroke="#900" stroke-width=".6"/>',
  left: '<path d="M7 1v10L1 6z" fill="#666"/>',
  right: '<path d="M1 1v10l6-5z" fill="#666"/>',
  chevron: '<path d="m1 1 4 4 4-4" fill="none" stroke="#444" stroke-width="1.100"/>',
  dlgClose: '<path d="m1 1 11 11M12 1 1 12" stroke="#000" stroke-width="1.100"/>',

  sLock: '<path d="M5 9V6q0-5 5-5t5 4" fill="none" stroke="#8f98a3" stroke-width="2.500"/><path d="M4 9h12v10H4z" fill="#8f98a3"/><path d="M9 12h2v4H9z" fill="#fff"/>',
  sCursor: '<path d="M2 3h16v14H2z" fill="none" stroke="#444" stroke-width="1.500" stroke-dasharray="3 2"/>' + arrow(6, 3, '#444'),
  sXyz: '<path d="M10 1v7M6 4.500h8" stroke="#8f98a3" stroke-width="1.600"/><path d="m1 11 4 7M5 11l-4 7M8 11l2 4 2-4M10 15v3M14 11.500h4l-4 6h5" fill="none" stroke="#8f98a3" stroke-width="1.400"/>',
  sGear: '<path d="M3 0v7M0 3.500h7" stroke="#444" stroke-width="1.700"/>' + gear(13, 13, '#c58b2a'),
  sArrow: arrow(5, 3, '#7b838d'),
  sCubeA: cube('#a9b0b8', '#8f98a3', '#9aa2ac') + '<circle cx="15" cy="15" r="4.500" fill="#b8bfc7" stroke="#8f98a3"/><path d="m13 15 2 2 3-4" stroke="#8f98a3" fill="none"/>',
  sCubeB: cube('#b9bfc6', '#8f98a3', '#a4acb5') + '<path d="M8 8v10" stroke="#d8dce0" stroke-width="2"/>',
  sCubeC: cube('#b9bfc6', '#9aa2ac', '#7f8892'),
  sCubeD: cube('#a9b0b8', '#9aa2ac', '#8f98a3'),
  sCubeE: '<path d="m3 5 7-4v8l-7 3z" fill="#e6c58c"/><path d="m3 12 7-3v9l-7-3z" fill="#d3a252"/><path d="m10 1 7 4v7l-7-3z" fill="#4b83bb"/><path d="m10 9 7 3v3l-7 3z" fill="#8fb3d6"/><path d="m9 19 6-6v6z" fill="#333"/>',
  sRect: '<path d="M2 2h16v16H2z" fill="#d8b36c" stroke="#444" stroke-width="1.700" stroke-dasharray="3 2"/>',
  sNever: '<circle cx="7" cy="8" r="6" fill="#9db5c9" stroke="#8699ab"/><circle cx="14" cy="14" r="5" fill="#a9c3d6" stroke="#8699ab"/><path d="m12 14 2 2 3-3" stroke="#fff" fill="none"/>',
  sVerify: arrow(0, 0, '#333') + '<path d="M9 7h10v12H9z" fill="#e8ecef" stroke="#b8924f" stroke-width="1.500"/><path d="m11 13 2 3 5-6" fill="none" stroke="#3f9a80" stroke-width="2"/>',
  sInvert: '<circle cx="10" cy="10" r="8" fill="none" stroke="#3f8a78" stroke-width="2" stroke-dasharray="8 4"/>' + arrow(1, 5, '#333') + arrow(12, 1, '#555'),
  sUndo: '<path d="M2 5q8-4 12 4" fill="none" stroke="#8f98a3" stroke-width="2.200"/><path d="m0 6 6-5v9z" fill="#8f98a3"/>' + arrow(10, 6, '#8f98a3'),

  mPoint: slash + '<path d="M11 3v16M3 11h16" stroke="#4b83bb" stroke-width="4"/>',
  mLine: slash + '<path d="M4 4l13 13" stroke="#b8924f" stroke-width="1.500"/><path d="M5 1v8M1 5h8M17 12v9M13 16.500h9" stroke="#4b83bb" stroke-width="2"/>',
  mArc: slash + '<circle cx="11" cy="11" r="8.500" fill="none" stroke="#4b83bb" stroke-width="2.500"/>',
  mSpline: slash + '<path d="M1 2q9 0 9 9t10 9" fill="none" stroke="#4b83bb" stroke-width="2.500"/>',
  mWire: slash + '<path d="m2 6 9-3 9 3v10l-9 3-9-3zM2 6l18 10M20 6 2 16M11 3v16" fill="none" stroke="#4b83bb" stroke-width="1.500"/>',
  mDim: slash + '<path d="M2 3v16M20 3v16" stroke="#4b83bb" stroke-width="2.500"/><path d="M4 11h14" stroke="#4b83bb" stroke-width="1.500"/><path d="m3 11 5-4v8zM19 11l-5-4v8z" fill="#4b83bb"/>',
  mSurf: slash + '<path d="M1 6q5 3 8-3 4 8 12 10l-6 7Q10 12 4 13z" fill="#c99b4d" stroke="#9b7b45"/><path d="M5 5q4 8 13 11" fill="none" stroke="#9b7b45"/>',
  mSolid: slash + '<path d="m2 7 11-3 8 3-9 3z" fill="#cfae78"/><path d="m2 7 10 3v10L2 17z" fill="#b8924f"/><path d="m21 7-9 3v10l9-4z" fill="#8d7143"/>',
  mGroup: '<path d="M11 1h11v10H11z" fill="#8a68b8"/><path d="M1 10h11v10H1z" fill="#cfae78" stroke="#8d7143" stroke-width="1.500"/>',
  mResult: '<path d="M11 2h10v9H11z" fill="#cfae78" stroke="#8d7143" stroke-width="1.500"/><path d="M0 10h12v11H0z" fill="#e02020"/>',
  mNamed: '<path d="M3 3h4v4H3zM3 9h4v4H3zM3 15h4v4H3z" fill="#4b83bb"/><path d="M8 4h3v14H8" fill="none" stroke="#444" stroke-width="1.500"/><path d="m12 6 4-2 4 4-3 2z" fill="#9cc7e0"/>',
  mColors: slash + '<path d="M3 4h4v4H3z" fill="#e07050"/><path d="M9 4h4v4H9z" fill="#c99b4d"/><path d="M15 4h4v4h-4z" fill="#7ab09a"/><path d="M3 10h4v4H3z" fill="#4b83bb"/><path d="M9 10h4v4H9z" fill="#9a6ac0"/><path d="M15 10h4v4h-4z" fill="#444"/><path d="M9 16h4v4H9z" fill="#d04aa0"/>',
  mLevels: '<path d="m0 6 11-5 11 5-11 4zM0 11l4-2 7 3 7-3 4 2-11 5zM0 16l4-2 7 3 7-3 4 2-11 5z" fill="#4b83bb"/>',
  mGear: slash + gear(11, 11, '#c99b4d'),
  mClear: '<circle cx="11" cy="11" r="9" fill="none" stroke="#e84a30" stroke-width="2.500"/><path d="m5 5 12 12" stroke="#e84a30" stroke-width="2.500"/>',

  shWire: `${globe}<path d="M1 7h18M1 13h18M6 2v16M14 2v16" stroke="#e6edf7" fill="none"/>`,
  shDim: `${globe}<path d="M2 7h16M2 13h16M7 2q-3 8 0 16M13 2q3 8 0 16" stroke="#b8cbe6" fill="none"/>`,
  shNo: `${globe}<path d="M3 14q7 3 14 0M10 1q-3 8-1 14M14 3q2 5 1 12" stroke="#e6edf7" fill="none"/>`,
  shOutline: '<circle cx="10" cy="10" r="9" fill="#fff"/><circle cx="9" cy="9" r="7.500" fill="#d2d2d2"/><circle cx="8" cy="7" r="4" fill="#f6f6f6"/>',
  shShaded: '<circle cx="10" cy="10" r="9" fill="#a6a6a6"/><circle cx="9" cy="8" r="7" fill="#d4d4d4"/><circle cx="8" cy="6" r="3.500" fill="#f6f6f6"/>',
  shTrans: '<circle cx="10" cy="10" r="9" fill="#8a8f99"/><path d="M4 17A9 9 0 0 1 17 4z" fill="#e3e3e3"/>'
}

const Icon = ({ name, w = 20, h: height = 20 }) =>
  h('svg', { width: w, height, viewBox: `0 0 ${w} ${height}`, 'aria-hidden': 'true', innerHTML: icons[name] })
Icon.props = ['name', 'w', 'h']

// -- Ribbon --
const tabs = ['Wireframe', 'Surfaces', 'Solids', 'Model Prep', 'Drafting', 'Transform', 'Machine', 'View']

const quickAccess = [
  { icon: 'new', label: 'New' },
  { icon: 'save', label: 'Save' },
  { icon: 'open', label: 'Open' },
  { icon: 'caretIcon', label: 'Recent files', w: 8, cls: 'menu' },
  { icon: 'print', label: 'Print' },
  { icon: 'saveAs', label: 'Save As' },
  { icon: 'zip', label: 'Zip2Go' },
  { icon: 'sep', label: 'Separator', w: 3 },
  { icon: 'undo', label: 'Undo' },
  { icon: 'redo', label: 'Redo' },
  { icon: 'custom', label: 'Customize', w: 8 }
]

const clipboard = [
  { icon: 'cut', text: 'Cut' },
  { icon: 'copy', text: 'Copy' },
  { icon: 'camera', text: 'Copy Image' }
]

const attributes = [
  { icon: 'aWire', label: 'Wireframe color', menu: true },
  { icon: 'aSolid', label: 'Solid color', menu: true },
  { icon: 'aSurf', label: 'Surface color', menu: true },
  { icon: 'aMat', label: 'Material', menu: true },
  { icon: 'aSet', label: 'Set all' },
  { icon: 'aMatch', label: 'Match entity' },
  { icon: 'aLines', label: 'Clear colors' }
]

const deletes = [
  { icon: 'delNon', text: 'Non-Associative' },
  { icon: 'delDup', text: 'Duplicates', menu: true },
  { icon: 'undel', text: 'Undelete Entity', off: true }
]

const displays = [
  { icon: 'arc', text: 'Arc Center Points' },
  { icon: 'ends', text: 'Endpoints' },
  { icon: 'blank', text: 'Blank', menu: true }
]

const analyzeA = [
  { icon: 'dyn', text: 'Dynamic' },
  { icon: 'angle', text: 'Angle' },
  { icon: 'chain', text: 'Chain' }
]

const analyzeB = [
  { icon: 'solid', text: 'Check Solid', menu: true },
  { icon: 'area', text: '2D Area', menu: true },
  { icon: 'stats', text: 'Statistics' }
]

const zDepth = ref('-110.0')
const level = ref('19')

// -- Toolpaths panel --
const panelBars = [
  ['pSelAll', 'pSelNone', '|', 'pRegen', 'pRegenX', 'pSwap', 'v', '|', 'pBack', 'pVerify', 'pSim', 'G1', 'pFeed', '|', 'pWand', '|', 'pHelp'],
  ['pLock', 'pWaves', 'pGhost', '|', 'pDown', 'pUp', 'pInsert', 'pScroll', '|', 'pPick', 'pBool', 'pOptions', 'v', '|', 'pMachine', 'pEdit']
]

// connector drawn in each 19px indent cell
const guides = {
  r: 'M10 9.500h9',
  '|': 'M9.500 0v18',
  t: 'M9.500 0v18M10 9.500h9',
  l: 'M9.500 0v10M10 9.500h9'
}

const tree = [
  { g: 'r', box: '-', icon: 'tGroup', text: 'Machine Group-1' },
  { g: ' t', box: '-', icon: 'tProps', text: 'Properties - Haas UMC-750' },
  { g: ' |t', icon: 'tFiles', text: 'Files' },
  { g: ' |t', icon: 'tTool', text: 'Tool settings' },
  { g: ' |l', icon: 'tStock', text: 'Stock setup' },
  { g: ' l', box: '-', icon: 'tOps', text: 'FORSIDE' },
  { g: '  t', box: '+', icon: 'tFolder', text: '1 - Constant Cut strategy 6:10 PM - [WCS: T' },
  { g: '  t', box: '+', icon: 'tModel', text: '2 - Stock model - [WCS: Top] - [Tplane: Top' },
  { g: '  t', box: '+', icon: 'tFolder', text: '3 - Pocket strategy 6:14 PM - [WCS: Top] - [' },
  { g: '  t', box: '+', icon: 'tModel', text: '4 - Stock model - [WCS: Bottom] - [Tplane:' },
  { g: '  t', box: '+', icon: 'tFolder', text: '5 - Contour strategy 2:16 PM - [WCS: Top] -' },
  { g: '  t', box: '+', icon: 'tGhost', text: '6 - Spiral strategy 8:44 AM - [WCS: Top] - [' },
  { g: '  t', box: '+', icon: 'tFolder', text: '7 - Radial strategy 9:29 AM - [WCS: Top] - [' },
  { g: '  t', box: '+', icon: 'tFolder', text: '8 - Radial strategy 9:29 AM - [WCS: Top] - [' },
  { g: '  t', box: '+', icon: 'tFolder', text: '9 - Radial strategy 9:29 AM - [WCS: Top] - [' },
  { g: '  l', icon: 'tArrow', text: '' }
]

// -- Graphics window --
const selectBar = ['sLock', 'sCursor', 'AutoCursor', 'v', 'sXyz', 'sGear', '|', 'sArrow', 'sCubeA', 'sCubeB', 'sCubeC', 'sCubeD', 'sCubeE', 'sCursor', 'v', 'sRect', 'v', 'sNever', 'sVerify', 'sInvert', 'sUndo']
const masks = ['mPoint', 'mLine', 'mArc', 'mSpline', 'mWire', 'mDim', 'mSurf', 'mSolid', 'mGroup', 'mResult', 'mNamed', 'mColors', 'mLevels', 'mGear', 'mClear']
const shading = ['shWire', 'shDim', 'shNo', 'shOutline', 'shShaded', 'shTrans']
const screws = [{ x: 1180, y: 802, r: 11 }, { x: 1273, y: 857, r: 17 }, { x: 1366, y: 909, r: 11 }]

const parse = (s) => s.split(' ').map(p => p.split(',').map(Number))

// Catmull-Rom through the points, as cubic segments
const smooth = (s) => {
  const p = parse(s)
  let d = `${p[0]}`
  for (let i = 0; i < p.length - 1; i++) {
    const a = p[i - 1] || p[i]
    const b = p[i]
    const c = p[i + 1]
    const e = p[i + 2] || c
    d += `C${b[0] + (c[0] - a[0]) / 6},${b[1] + (c[1] - a[1]) / 6} ${c[0] - (e[0] - b[0]) / 6},${c[1] - (e[1] - b[1]) / 6} ${c}`
  }
  return d
}
const open = (s) => 'M' + smooth(s)
const shape = (...parts) => 'M' + parts.map(smooth).join('L') + 'Z'

// point at fraction t of a polyline's length
const along = (pts, t) => {
  const len = pts.slice(1).map((p, i) => Math.hypot(p[0] - pts[i][0], p[1] - pts[i][1]))
  let rest = len.reduce((a, b) => a + b, 0) * t
  for (let i = 0; i < len.length; i++) {
    if (rest <= len[i] || i === len.length - 1) {
      const k = Math.min(1, rest / len[i])
      return [pts[i][0] + (pts[i + 1][0] - pts[i][0]) * k, pts[i][1] + (pts[i + 1][1] - pts[i][1]) * k]
    }
    rest -= len[i]
  }
}

// back-and-forth passes between two boundaries
const zigzag = (sa, sb, n) => {
  const a = parse(sa)
  const b = parse(sb)
  let d = 'M'
  for (let i = 0; i <= n; i++) {
    const p = along(a, i / n).map(v => v.toFixed(1))
    const q = along(b, i / n).map(v => v.toFixed(1))
    d += i % 2 ? `${q} ${p} ` : `${p} ${q} `
  }
  return d
}

const hatchLeft = zigzag(
  '1209,419 1180,440 1150,468 1125,502 1113,530 1110,550 1113,580 1125,605 1145,632 1163,650 1173,650',
  '1211,424 1201,445 1203,470 1214,500 1222,520 1224,540 1230,570 1245,600 1265,620 1280,630 1296,636', 116)
const hatchTop = zigzag(
  '1288,445 1300,430 1317,412 1345,392 1372,377 1395,362',
  '1292,452 1308,443 1335,435 1363,430 1378,427 1391,425', 36)
const hatchEdge = zigzag(
  '1617,405 1650,423 1680,450 1705,480 1722,508 1728,520',
  '1620,411 1645,430 1670,454 1690,480 1710,505 1724,520', 46)
const hatchFront = zigzag(
  '1244,684 1258,688 1315,687 1367,682 1414,670 1482,647',
  '1246,690 1272,702 1320,715 1362,721 1414,730 1461,729 1512,725', 52)
const hatchRight = zigzag(
  '1482,652 1522,642 1551,630 1584,610 1606,597 1627,563 1627,530 1625,513',
  '1512,725 1550,718 1579,707 1636,680 1683,650 1706,622 1698,598 1675,565 1634,523', 104)

const b1In = '1367,338 1330,349 1290,367 1244,399'
const b2Low = '1713,610 1703,583 1675,547 1638,517 1602,493 1551,468 1501,452 1455,445 1418,443 1388,442'
const shapes = {
  b1Top: shape('1367,338 1330,342 1299,349 1257,373 1212,415 1200,445 1202,477 1216,503 1240,526 1256,531 1265,520 1261,503 1244,483 1225,460 1221,443 1228,416 1244,397 1290,367 1330,349 1367,338'),
  b1Dark: shape(b1In, '1280,440 1289,423 1303,410 1335,387 1380,359'),
  b1Light: shape('1244,399 1228,416 1221,443 1225,460 1244,483 1261,503', '1265,505 1265,483 1267,463 1280,440'),
  fillet1: shape('1380,359 1335,387 1303,410 1289,423 1276,446 1267,463 1265,483 1267,517 1290,550 1316,578', '1324,565 1303,547 1285,517 1281,483 1290,453 1308,423 1354,393 1398,375'),
  tail: shape('1244,527 1256,531 1266,518', '1290,548 1317,577 1315,584 1298,582 1280,573 1260,553 1244,527'),
  tailFillet: shape('1216,507 1230,547 1244,570 1271,595 1303,607 1328,597 1335,583 1324,565 1303,547 1285,517', '1267,517 1256,531', '1240,526 1216,507'),
  b2Face: shape('1403,347 1434,345 1473,348 1542,370 1588,400 1643,443 1684,490 1707,530 1719,577 1713,610', b2Low),
  crescent: shape('1542,370 1588,400 1643,443 1684,490 1707,530 1719,577', '1736,535 1717,497 1671,446 1618,405 1542,370'),
  fillet2: shape(b2Low, '1388,442 1375,447 1378,455 1391,460 1455,460 1501,468 1547,487 1588,502 1611,517 1657,547 1689,590 1700,630'),
  shineLine: open('1475,455 1501,460 1551,477 1602,503 1634,526'),
  b3Top: shape('1184,633 1249,638 1301,636 1355,628 1409,613 1473,587 1537,547 1579,510 1592,503 1604,507 1606,517', '1606,517 1592,540 1550,575 1499,607 1437,633 1362,655 1286,663 1237,663'),
  b3Side: shape('1237,663 1286,663 1362,655 1437,633 1499,607 1550,575 1592,540 1606,517', '1586,550 1570,567 1532,600 1485,627 1428,650 1362,670 1286,676 1228,673'),
  fillet3: shape('1228,673 1286,676 1362,670 1428,650 1485,627 1532,600 1570,567 1579,557 1589,573 1581,588 1547,617 1500,650 1440,680 1380,695 1284,703 1258,702 1237,693 1226,677'),
  innerArc: open('1284,703 1343,696 1414,680 1482,654 1532,627')
}

// -- Setup dialog --
const position = reactive({ x: '-279.0', y: '-264.0', z: '-379.0' })

const coords = [
  { axis: 'X:', value: '-151.50259' },
  { axis: 'Y:', value: '288.74193' },
  { axis: 'Z:', value: '-110.00000' }
]
</script>

<style>
html,
body {
  background: #fff;
}
</style>

<style scoped>
* {
  box-sizing: border-box;
}

.app {
  display: flex;
  flex-direction: column;
  height: 100vh;
  overflow: hidden;
  background: #fff;
  color: #444;
  font: 13px/15px "Open Sans", "Segoe UI", sans-serif;
}

button {
  background: none;
  border: none;
  padding: 0;
  margin: 0;
  font: inherit;
  color: inherit;
}

svg {
  display: block;
  flex: none;
}

.icon-btn {
  display: flex;
  align-items: center;
  justify-content: center;
}

.caret {
  flex: none;
  width: 0;
  height: 0;
  border: 3px solid transparent;
  border-top: 4px solid #6a6a6a;
  border-bottom: 0;
}

.caret.large {
  border-width: 6px 5px 0;
}

/* title bar */
.titlebar {
  display: flex;
  align-items: flex-start;
  height: 40px;
}

.qat {
  display: flex;
  gap: 9px;
  padding: 6px 0 0 13px;
  flex: 1;
}

.qat .menu {
  margin: 0 0 0 -3px;
}

.doc-title {
  padding-top: 12px;
  color: #b0b0b0;
  white-space: nowrap;
}

.win-buttons {
  display: flex;
  gap: 36px;
  padding: 9px 17px 0 33px;
}

/* tabs */
.tabs {
  display: flex;
  height: 35px;
}

.tab {
  padding: 1px 19px 0 18px;
  height: 35px;
}

.tab.file {
  width: 77px;
  background: #2b579a;
  color: #fff;
}

.tab.home {
  width: 72px;
  height: 36px;
  margin: 1px 2px 0 3px;
  padding-bottom: 2px;
  background: #fff;
  border: 1px solid #d2d2d2;
  border-bottom: none;
  color: #111;
  z-index: 1;
}

.context-tab {
  display: flex;
  flex-direction: column;
  align-items: center;
  height: 75px;
  margin-top: -40px;
  background: #fbf0f1;
  border-top: 5px solid #d13438;
}

.context-name {
  height: 35px;
  padding-top: 7px;
  color: #6b3038;
}

.account {
  display: flex;
  align-items: center;
  gap: 10px;
  margin-left: auto;
  padding: 0 6px 2px 0;
}

.my-link {
  color: #555;
  text-decoration: none;
  padding: 4px 2px 0 0;
}

/* ribbon */
.ribbon {
  display: flex;
  height: 116px;
  border: 1px solid #d2d2d2;
  flex: none;
}

.group {
  display: flex;
  flex-direction: column;
  margin: 2px 0 3px;
  border-right: 1px solid #d5d5d5;
}

.group-body {
  display: flex;
  height: 86px;
  padding: 2px 4px 0;
}

.group-label {
  position: relative;
  padding-top: 5px;
  text-align: center;
}

.with-launcher {
  padding-right: 20px;
}

.launcher {
  position: absolute;
  right: 6px;
  top: 7px;
}

.clipboard { width: 166px; }
.attributes { width: 259px; }
.organize { width: 131px; }
.delete { width: 190px; }
.display { width: 229px; }
.analyze { width: 393px; }
.addins { width: 130px; }
.newgroup { width: 88px; }

.big {
  display: flex;
  flex-direction: column;
  align-items: center;
  width: 56px;
  padding-top: 3px;
  white-space: nowrap;
}

.big span {
  padding-top: 6px;
}

.big.wide {
  width: 86px;
}

.newgroup .group-body {
  padding: 2px 0 0;
}

.big > .caret {
  margin-top: 6px;
}

.big.distance {
  width: 60px;
}

.big.path {
  width: 68px;
}

.big.finder {
  width: 64px;
}

.distance .caret {
  display: inline-block;
  vertical-align: 2px;
}

.small-col {
  display: flex;
  flex-direction: column;
}

.small-col.first {
  width: 94px;
}

.small {
  display: flex;
  align-items: center;
  gap: 3px;
  height: 26px;
  white-space: nowrap;
}

.small .caret {
  margin-left: 4px;
}

.small:disabled {
  color: #a6a6a6;
}

.attr-body,
.org-body {
  flex-direction: column;
  padding: 13px 7px 0;
}

.attr-row,
.org-row {
  display: flex;
  align-items: center;
}

.style-combos {
  display: flex;
}

.style-combo {
  display: flex;
  align-items: center;
  justify-content: space-between;
  width: 69px;
  height: 25px;
  padding: 0 5px 0 2px;
  margin-right: -1px;
  border: 1px solid #ababab;
}

.style-combo.point {
  width: 44px;
  padding-left: 8px;
}

.line {
  width: 47px;
  height: 2px;
  background: #666;
}

.line.thick {
  height: 3px;
  background: #111;
}

.plane-mode {
  margin-left: 6px;
  color: #666;
}

.attr-icons {
  display: flex;
  align-items: center;
  gap: 7px;
  padding: 14px 0 0 3px;
}

.attr-icons .caret {
  margin: 4px 1px 0 0;
}

.org-body {
  gap: 11px;
  padding-left: 11px;
}

.org-row label {
  width: 24px;
  padding-left: 5px;
}

.org-row label:has(svg) {
  padding: 0;
}

.field {
  display: flex;
  align-items: center;
  width: 92px;
  height: 25px;
  padding-right: 5px;
  border: 1px solid #ababab;
}

.field input {
  width: 100%;
  border: none;
  padding: 0 4px;
  outline: none;
  font: inherit;
  color: #111;
}

/* workspace */
.workspace {
  display: flex;
  flex: 1;
  min-height: 0;
}

.panel {
  display: flex;
  flex-direction: column;
  width: 350px;
  border-right: 4px solid #f0f0f0;
}

.panel-head {
  display: flex;
  align-items: center;
  justify-content: space-between;
  height: 42px;
  padding: 0 10px 0 4px;
}

h1 {
  margin: 0;
  font-size: 23px;
  line-height: 30px;
  font-weight: 400;
  color: #3b3b3b;
}

.panel-tools {
  display: flex;
  align-items: center;
  gap: 12px;
  padding-bottom: 1px;
}

.panel-bar {
  display: flex;
  align-items: center;
  gap: 6px;
  height: 26px;
  padding-left: 5px;
}

.panel-bar .icon-btn,
.panel-bar .caret {
  opacity: .5;
}

.g1 {
  width: 16px;
  color: #3d6292;
  font-size: 12px;
}

.bar-sep {
  width: 1px;
  height: 22px;
  margin: 0 2px;
  background: #ccc;
}

.bar-caret {
  margin: 0 1px;
}

.tree-box {
  display: flex;
  flex-direction: column;
  justify-content: space-between;
  flex: 1;
  margin: 6px 4px 0 2px;
  border: 1px solid #cfcfcf;
}

.tree {
  list-style: none;
  margin: 0;
  padding: 2px 0 0 3px;
  overflow: hidden;
}

.tree-row {
  display: flex;
  align-items: center;
  height: 18px;
}

.tree-text {
  padding-left: 4px;
  white-space: nowrap;
  font: 13px/18px "DejaVu Sans Condensed", Tahoma, sans-serif;
  color: #111;
}

.insert-row {
  width: 216px;
  height: 18px;
  margin-left: 3px;
  background: #d6e2f3;
}

.hscroll {
  display: flex;
  height: 21px;
  margin: 1px;
  background: #ededed;
}

.hscroll button {
  display: flex;
  align-items: center;
  justify-content: center;
  width: 21px;
  background: #fff;
  border: 1px solid #cfcfcf;
}

.hscroll .end {
  margin-left: auto;
}

.thumb {
  width: 201px;
  background: #fff;
  border: 1px solid #cfcfcf;
}

.panel-tabs {
  display: flex;
  height: 27px;
  margin: 22px 0 0;
  padding-bottom: 1px;
}

.panel-tabs button {
  padding: 0 8px;
  border-top: 1px solid #e6e6e6;
}

.panel-tabs button:last-child {
  flex: 1;
  text-align: left;
}

.panel-tabs .active {
  width: 75px;
  padding: 0 7px 2px;
  border: 1px solid #8d8d8d;
  border-top: none;
}

/* graphics window */
.viewport {
  position: relative;
  flex: 1;
  overflow: hidden;
  background: linear-gradient(#959faa, #bdc1cb 38%, #d0d4d8 52%, #eceef0 72%, #fff);
}

.model {
  position: absolute;
  top: 39px;
  right: 130px;
}

.toolpath {
  fill: none;
  stroke: #2a78e4;
  stroke-width: 1.2;
}

.toolpath.dense {
  stroke-width: 1;
}

.rapid path {
  fill: none;
  stroke: #ffff20;
  stroke-width: 1.4;
}

.select-bar {
  position: absolute;
  top: 8px;
  right: 474px;
  display: flex;
  align-items: center;
  gap: 8px;
  height: 42px;
  padding: 0 26px 0 24px;
  border-radius: 21px;
  background: rgba(255, 255, 255, .25);
}

.select-bar .icon-btn {
  height: 42px;
  opacity: .75;
}

.select-bar .hot {
  padding: 0 3px;
  margin: 0 -3px;
  background: #9fb9cc;
}

.auto {
  margin-left: -5px;
  padding-bottom: 3px;
  color: #838c97;
}

.select-bar .caret {
  margin: 0 3px;
}

.select-sep {
  width: 1px;
  height: 42px;
  margin: 0 -3px 0 -5px;
  background: #98a2ad;
}

.masks {
  position: absolute;
  top: 21px;
  right: 8px;
  bottom: 28px;
  display: flex;
  flex-direction: column;
  justify-content: space-between;
}

.masks button {
  display: flex;
  align-items: center;
  justify-content: center;
  width: 43px;
  height: 43px;
  border: 1px solid rgba(140, 145, 150, .4);
  border-radius: 50%;
  background: rgba(238, 238, 238, .3);
}

.masks svg {
  opacity: .5;
  overflow: visible;
}

.gnomon {
  position: absolute;
  left: 40px;
  bottom: 31px;
  font: bold 13px "DejaVu Sans Condensed", sans-serif;
}

.view-name,
.scale {
  position: absolute;
  color: #000;
  font: bold 12px/12px "DejaVu Sans Condensed", Tahoma, sans-serif;
}

.view-name {
  left: 20px;
  bottom: 10px;
}

.scale {
  right: 23px;
  bottom: 10px;
  width: 98px;
  display: flex;
  flex-direction: column;
  text-align: center;
  border: 1px solid #000;
  border-width: 0 1px;
}

.scale-top {
  height: 14px;
  border-bottom: 1px solid #000;
}

/* setup dialog */
.dialog {
  position: absolute;
  left: 97px;
  top: 137px;
  width: 525px;
  border: 1px solid #555;
  background: #f0f0f0;
  box-shadow: 0 5px 18px rgba(0, 0, 0, .4);
  font: 12px/16px "Open Sans", Tahoma, sans-serif;
  color: #000;
}

.dialog-head {
  display: flex;
  align-items: center;
  justify-content: space-between;
  height: 37px;
  padding: 0 14px 0 9px;
  background: #fff;
  font-size: 14px;
}

.dialog-body {
  display: flex;
  flex-direction: column;
  padding: 13px 10px 12px 11px;
}

.form-row {
  display: flex;
  align-items: flex-end;
  gap: 11px;
  height: 47px;
  margin-bottom: 13px;
}

.form-item {
  display: flex;
  flex-direction: column;
  justify-content: space-between;
  height: 44px;
  align-self: flex-start;
}

.grow { width: 100%; }
.mid { width: 305px; }
.launch { width: 206px; }

.combo {
  position: relative;
}

.combo select {
  display: block;
  appearance: none;
  width: 100%;
  height: 24px;
  padding: 0 3px;
  border: 1px solid #adadad;
  border-radius: 0;
  background: #e1e1e1;
  font: inherit;
  color: #000;
}

.combo svg {
  position: absolute;
  right: 5px;
  top: 9px;
}

.btn {
  width: 86px;
  height: 28px;
  border: 1px solid #adadad;
  background: #e1e1e1;
}

.btn.primary {
  border: 2px solid #0078d7;
}

.position {
  height: 48px;
}

.pos {
  display: flex;
  height: 28px;
}

.pos input {
  flex: 1;
  min-width: 0;
  height: 28px;
  margin-right: -1px;
  padding: 0 4px 4px;
  border: 1px solid #7a7a7a;
  background: #ffff80;
  box-shadow: inset 0 0 0 1px #fff;
  font: inherit;
}

.pos input:last-child {
  margin-right: 0;
}

.form-row.last {
  gap: 12px;
  margin: 8px 0 0;
}

/* status bar */
.status {
  display: flex;
  align-items: center;
  height: 30px;
  flex: none;
  justify-content: flex-end;
  padding-right: 2px;
  background: #2b579a;
  color: #fff;
}

.st {
  white-space: nowrap;
}

.section {
  font-size: 14px;
}

.selected {
  margin: 0 82px 0 18px;
}

.coord {
  display: flex;
  gap: 11px;
  margin-right: 20px;
  font-size: 14px;
}

.status .caret {
  margin: 0 12px 4px 9px;
  opacity: .8;
}

.coord + .caret {
  margin-left: -10px;
}

.plane {
  margin-left: 1px;
}

.st + .plane {
  margin-left: 13px;
}

.shading {
  display: flex;
  padding-left: 1px;
}

.shading button {
  display: flex;
  align-items: center;
  justify-content: center;
  width: 32px;
  height: 30px;
}

.shading .on {
  background: #0f66cc;
}
</style>
